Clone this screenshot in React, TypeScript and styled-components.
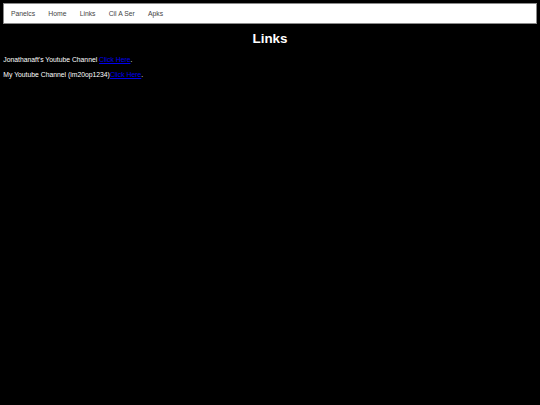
import React from 'react';
import styled, { createGlobalStyle } from 'styled-components';

const GlobalStyle = createGlobalStyle`
  html, body {
    background: #000;
  }
  body {
    margin: 3.33px;
    font-family: 'Liberation Sans', Arial, sans-serif;
    font-size: 6.8px;
    color: #fff;
  }
`;

const NavBar = styled.ul`
  list-style: none;
  margin: 0;
  padding: 0;
  display: flex;
  background: #fff;
  border: 0.5px solid #8a8a8a;
`;

const NavItem = styled.li`
  a {
    display: block;
    padding: 5.6px 6.6px 5.4px;
    color: #444;
    text-decoration: none;
    line-height: 7.7px;
  }
`;

const Title = styled.h1`
  text-align: center;
  font-size: 13.4px;
  font-weight: bold;
  margin: 7px 0 10px;
  line-height: 15.4px;
`;

const Line = styled.p`
  margin: 6.67px 0;
  line-height: 7.7px;
  a {
    color: #0000ee;
  }
`;

const links = ['Panelcs', 'Home', 'Links', 'Cil A Ser', 'Apks'];

export default function App() {
  return (
    <>
      <GlobalStyle />
      <nav>
        <NavBar>
          {links.map((l) => (
            <NavItem key={l}>
              <a href="#">{l}</a>
            </NavItem>
          ))}
        </NavBar>
      </nav>
      <Title>Links</Title>
      <Line>
        Jonathanaft's Youtube Channel <a href="#">Click Here</a>.
      </Line>
      <Line>
        My Youtube Channel (im20op1234)<a href="#">Click Here</a>.
      </Line>
    </>
  );
}
